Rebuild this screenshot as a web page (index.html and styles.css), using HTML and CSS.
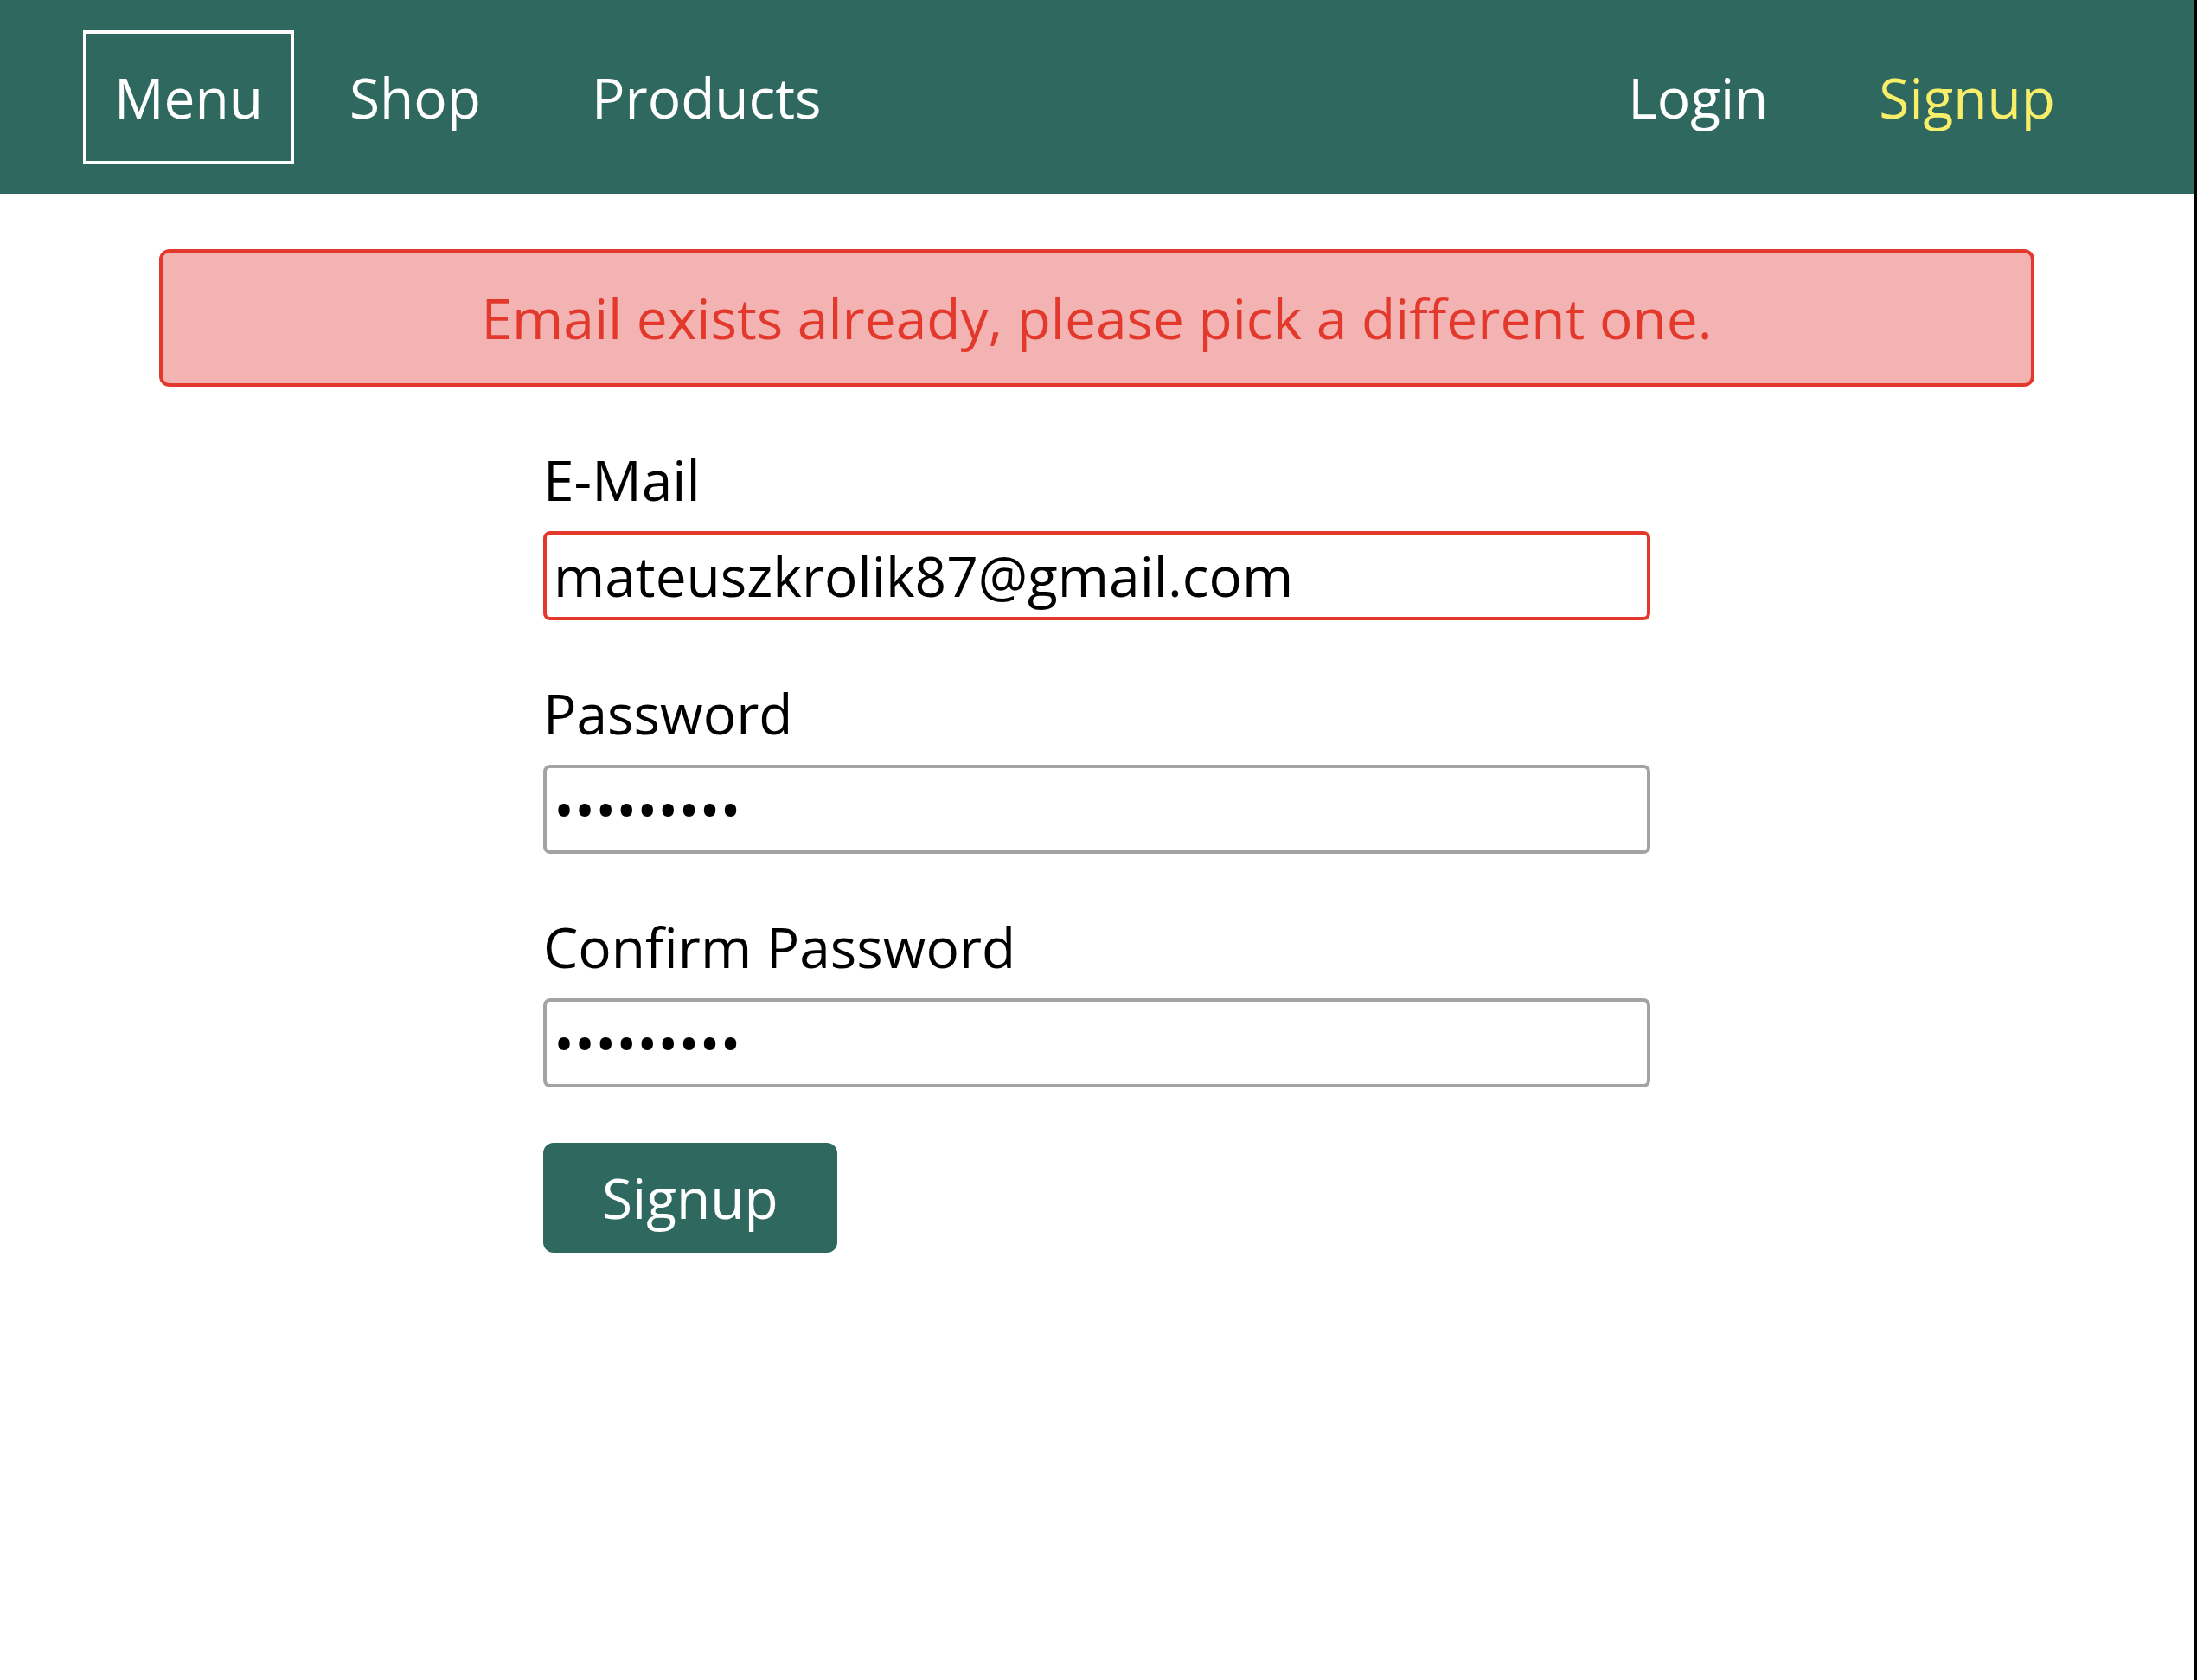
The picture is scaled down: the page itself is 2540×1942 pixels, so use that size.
FILE: index.html
```html
<!DOCTYPE html>
<html lang="en">
<head>
<meta charset="utf-8">
<title>Signup</title>
<link rel="stylesheet" href="styles.css">
</head>
<body>
<header class="main-header">
  <button class="mobile-nav__toggle" type="button">Menu</button>
  <nav class="main-header__nav">
    <ul class="main-header__item-list">
      <li class="main-header__item"><a href="#">Shop</a></li>
      <li class="main-header__item"><a href="#">Products</a></li>
    </ul>
    <ul class="main-header__item-list">
      <li class="main-header__item"><a href="#">Login</a></li>
      <li class="main-header__item"><a href="#" class="active">Signup</a></li>
    </ul>
  </nav>
</header>
<main class="page">
  <div class="user-message user-message--error">Email exists already, please pick a different one.</div>
  <form class="login-form" action="#">
    <div class="form-control">
      <label for="email">E-Mail</label>
      <input class="invalid" type="email" id="email" name="email" value="mateuszkrolik87@gmail.com">
    </div>
    <div class="form-control">
      <label for="password">Password</label>
      <input type="password" id="password" name="password" value="123456789">
    </div>
    <div class="form-control">
      <label for="confirmPassword">Confirm Password</label>
      <input type="password" id="confirmPassword" name="confirmPassword" value="123456789">
    </div>
    <button class="btn" type="submit">Signup</button>
  </form>
</main>
</body>
</html>
```

FILE: styles.css
```css
* {
  box-sizing: border-box;
}

html {
  background: #000;
  height: 100%;
}

body {
  margin: 0 4px 0 0;
  min-height: 100%;
  background: #fff;
  font-family: "Open Sans", sans-serif;
  font-size: 64px;
  color: #000;
}

.main-header {
  width: 100%;
  height: 224px;
  background-color: #2e685e;
  padding: 0 96px;
  display: flex;
  align-items: center;
}

.mobile-nav__toggle {
  font: inherit;
  background: transparent;
  border: 4px solid #fff;
  color: #fff;
  padding: 30px 32px;
  margin: 0;
  line-height: normal;
}

.main-header__nav {
  flex: 1;
  height: 100%;
  display: flex;
  align-items: center;
  justify-content: space-between;
}

.main-header__item-list {
  list-style: none;
  margin: 0;
  padding: 0;
  display: flex;
}

.main-header__item {
  margin: 0 64px;
  padding: 0;
}

.main-header__item a {
  text-decoration: none;
  color: #fff;
}

.main-header__item a.active {
  color: #f9ee6a;
}

.page {
  display: block;
  padding: 64px;
}

.user-message {
  margin: auto;
  width: 90%;
  border: 4px solid #e3392d;
  padding: 32px;
  border-radius: 12px;
  background: #f3b3b3;
  color: #e3392d;
  text-align: center;
}

.login-form {
  width: 1280px;
  max-width: 90%;
  margin: auto;
  display: block;
}

.form-control {
  margin: 64px 0;
}

.form-control label,
.form-control input {
  display: block;
  width: 100%;
  margin-bottom: 16px;
}

.form-control input {
  border: 4px solid #a3a3a3;
  font: inherit;
  color: #000;
  padding: 4px 8px;
  border-radius: 8px;
  background: #fff;
}

.form-control input.invalid {
  border-color: #e3392d;
}

.btn {
  font: inherit;
  border: 4px solid #2e685e;
  background: #2e685e;
  color: #fff;
  padding: 16px 64px;
  border-radius: 12px;
  line-height: normal;
}
```
